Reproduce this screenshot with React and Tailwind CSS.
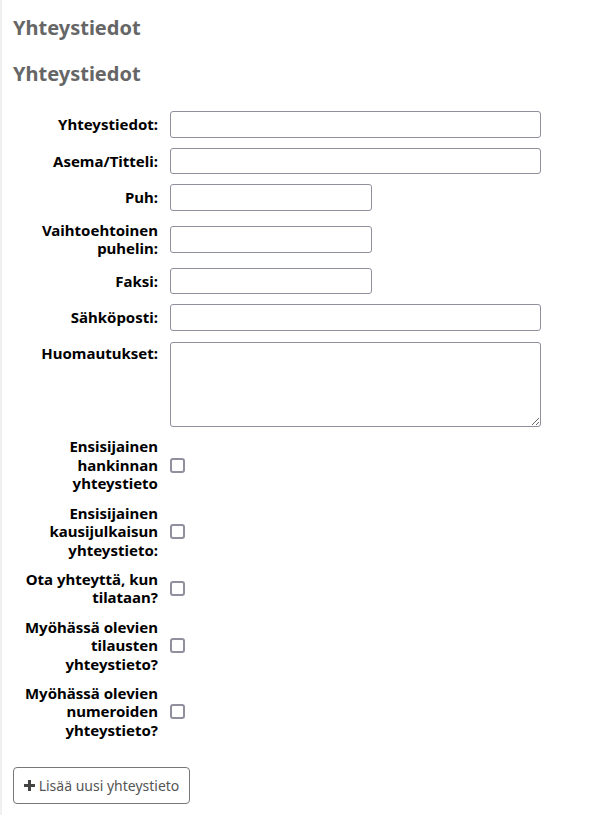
import React from "react";

const font = { fontFamily: '"Noto Sans", "Open Sans", sans-serif' };

function Label({ children, top }) {
  return (
    <div
      className={`w-[145px] shrink-0 text-right text-[15px] font-bold leading-[18.5px] text-black ${top ? "self-start pt-[2px]" : ""}`}
    >
      {children}
    </div>
  );
}

function TextRow({ label, wide = true }) {
  return (
    <div className="flex items-center gap-[12px]">
      <Label>{label}</Label>
      <input
        type="text"
        className={`h-[26.6px] ${wide ? "w-[371px]" : "w-[202px]"} rounded-[3px] border border-[#8f8f9d] bg-white px-1 text-[14px] outline-none`}
      />
    </div>
  );
}

function CheckRow({ label }) {
  return (
    <div className="flex items-center gap-[12px]">
      <Label>{label}</Label>
      <span className="block h-[15px] w-[15px] rounded-[3px] border-2 border-[#8f8f9d] bg-white" />
    </div>
  );
}

export default function App() {
  return (
    <div className="min-h-[815px] border-l-2 border-[#f0f0f0] bg-white pl-[11px] pt-[14px]" style={font}>
      <h2 className="text-[20px] font-bold leading-[28px] text-[#666]">Yhteystiedot</h2>
      <h3 className="mt-[18px] text-[20px] font-bold leading-[28px] text-[#666]">Yhteystiedot</h3>
      <div className="mt-[23px] flex flex-col gap-[10px]">
        <TextRow label="Yhteystiedot:" />
        <TextRow label="Asema/Titteli:" />
        <TextRow label="Puh:" wide={false} />
        <TextRow label={<>Vaihtoehtoinen<br />puhelin:</>} wide={false} />
        <TextRow label="Faksi:" wide={false} />
        <TextRow label="Sähköposti:" />
        <div className="mt-[1px] flex gap-[12px]">
          <Label top>Huomautukset:</Label>
          <textarea className="block h-[85px] w-[371px] rounded-[3px] border border-[#8f8f9d] bg-white px-1 text-[14px] outline-none" />
        </div>
      </div>
      <div className="mt-[10.5px] flex flex-col gap-[10.7px]">
        <CheckRow label={<>Ensisijainen<br />hankinnan<br />yhteystieto</>} />
        <CheckRow label={<>Ensisijainen<br />kausijulkaisun<br />yhteystieto:</>} />
        <CheckRow label={<>Ota yhteyttä, kun<br />tilataan?</>} />
        <CheckRow label={<>Myöhässä olevien<br />tilausten<br />yhteystieto?</>} />
        <CheckRow label={<>Myöhässä olevien<br />numeroiden<br />yhteystieto?</>} />
      </div>
      <button className="mt-[28px] flex h-[37px] w-[177px] items-center justify-center gap-[4px] rounded-[4px] border border-[#777] bg-white text-[14px] text-[#555]">
        <svg width="11" height="11" viewBox="0 0 11 11" aria-hidden="true">
          <path d="M4 0h3v4h4v3H7v4H4V7H0V4h4z" fill="#444" />
        </svg>
        <span>Lisää uusi yhteystieto</span>
      </button>
    </div>
  );
}
